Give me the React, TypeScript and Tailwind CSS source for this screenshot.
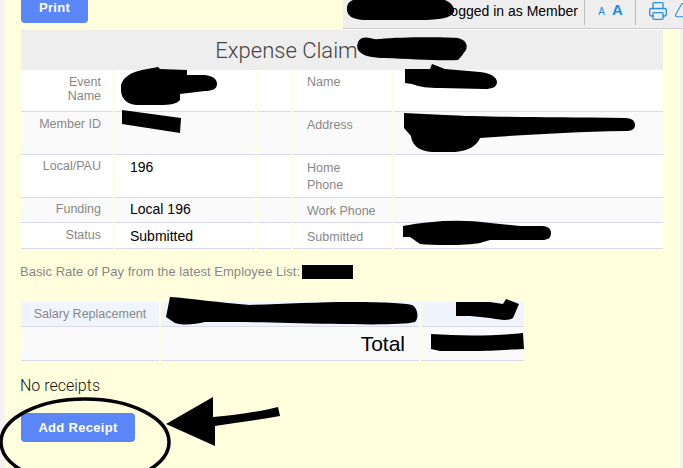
import { Printer, Triangle } from "lucide-react";

const sans = "font-['Liberation_Sans',Arial,sans-serif]";

type Row = {
  h: string;
  bg: string;
  label: string;
  value: string;
  label2: string;
  labelTop: string;
  valueTop: string;
  label2Top: string;
};

const rows: Row[] = [
  { h: "h-[42px]", bg: "bg-white", label: "Event\nName", value: "", label2: "Name", labelTop: "pt-[5px] leading-[14px]", valueTop: "pt-[4px]", label2Top: "pt-[5px] leading-[15px]" },
  { h: "h-[43px]", bg: "bg-[#fafafa]", label: "Member ID", value: "", label2: "Address", labelTop: "pt-[5px] leading-[15px]", valueTop: "pt-[4px]", label2Top: "pt-[6px] leading-[15px]" },
  { h: "h-[43px]", bg: "bg-white", label: "Local/PAU", value: "196", label2: "Home\nPhone", labelTop: "pt-[4px] leading-[15px]", valueTop: "pt-[3px]", label2Top: "pt-[5px] leading-[17px]" },
  { h: "h-[25px]", bg: "bg-[#fafafa]", label: "Funding", value: "Local 196", label2: "Work Phone", labelTop: "pt-[4px] leading-[15px]", valueTop: "pt-[2px]", label2Top: "pt-[6px] leading-[15px]" },
  { h: "h-[26px]", bg: "bg-white", label: "Status", value: "Submitted", label2: "Submitted", labelTop: "pt-[5px] leading-[15px]", valueTop: "pt-[4px]", label2Top: "pt-[7px] leading-[15px]" },
];

function Redactions() {
  return (
    <svg className="absolute left-0 top-0 pointer-events-none" width="683" height="468" viewBox="0 0 683 468">
      <g fill="#000">
        <path d="M353 0 H445 C452 3 455 8 454 12 C451 18 440 20 420 20 H365 C352 20 346 15 347 8 C347 4 349 2 353 0Z" />
        <path d="M362 38 C368 36 372 40 380 39 C400 37 440 37 458 38 C466 40 468 45 466 50 C463 54 461 57 458 60 C440 61 410 59 385 58 C372 58 362 56 358 50 C356 45 358 40 362 38Z" />
        <path d="M121 85 C123 77 132 72 142 70 L158 67 L160 69 L187 70 L187 75 L205 75 C213 76 217 79 217 84 C217 89 212 91 205 91 L180 94 L180 100 C177 104 170 105 160 105 L138 105 C128 105 121 99 121 90Z" />
        <path d="M405 69 L430 69 L432 64 L445 69 L480 72 C490 73 497 77 497 82 C497 87 492 89 485 89 L440 88 C428 88 420 87 412 84 L405 83Z" />
        <path d="M122 110 L181 118 L180 133 L122 124Z" />
        <path d="M404 113 L445 115 C480 117 540 117 625 118 C632 118 635 121 635 125 C635 129 632 131 625 131 C570 132 520 135 480 138 C478 144 470 151 455 152 L432 152 C420 151 412 146 411 136 L404 128Z" />
        <path d="M403 226 C430 221 460 219 490 223 L520 226 L542 226 C548 226 551 229 551 233 C551 238 548 240 542 240 L490 240 L480 243 C470 245 440 246 420 244 L410 237 L403 237Z" />
        <rect x="302" y="265" width="51" height="14" />
        <path d="M170 297 C190 298 220 303 250 305 C280 304 320 302 350 302 C380 302 405 303 412 305 C418 308 419 318 415 322 C400 326 340 324 290 323 C260 322 235 322 205 322 C195 324 185 326 175 323 L166 317Z" />
        <path d="M456 302 L490 302 L503 304 L506 299 L519 304 L513 318 C509 321 500 320 490 318 L470 316 L456 316Z" />
        <path d="M431 334 C460 336 495 336 523 333 L524 349 C500 350 490 351 470 351 L440 351 L431 349Z" />
        <path d="M166 424 L213 397 L213 417 C235 415 258 412 278 407 L280 416 C258 420 235 423 215 426 L215 446Z" />
      </g>
      <ellipse cx="85" cy="442" rx="84" ry="43" fill="none" stroke="#000" strokeWidth="3.5" />
    </svg>
  );
}

export default function App() {
  return (
    <div className={`relative w-[683px] h-[468px] overflow-hidden bg-[#f2f2f2] pl-[5px] pr-[3px] ${sans}`}>
      <main className="h-full bg-[#ffffdd] pl-[15px] flex flex-col">
        <button className="mt-[-7px] ml-[1px] w-[67px] h-[30px] shrink-0 rounded-[4px] bg-[#5b86f7] text-white text-[13px] tracking-[0.3px] font-bold">
          Print
        </button>

        <section className="mt-[7px] ml-[1px] w-[642px]">
          <h1 className="h-[40px] bg-[#eeeeee] flex items-center justify-center text-[22px] text-[#444444] font-light font-['Roboto',sans-serif] pr-[111px]">
            Expense Claim
          </h1>
          {rows.map((r) => (
            <div key={r.label} className={`grid grid-cols-[92px_140px_34px_99px_269px] gap-x-[2px] ${r.h}`}>
              <div className={`${r.bg} border-b border-[#d9d9ea] pr-[12px] text-right text-[12.5px] text-[#888888] whitespace-pre ${r.labelTop}`}>
                {r.label}
              </div>
              <div className={`${r.bg} border-b border-[#d9d9ea] pl-[15px] text-[14px] leading-[18px] text-black ${r.valueTop}`}>
                {r.value}
              </div>
              <div className={`${r.bg} border-b border-[#d9d9ea]`} />
              <div className={`${r.bg} border-b border-[#d9d9ea] pl-[14px] text-[12.5px] text-[#888888] whitespace-pre ${r.label2Top}`}>
                {r.label2}
              </div>
              <div className={`${r.bg} border-b border-[#d9d9ea]`} />
            </div>
          ))}
        </section>

        <p className="mt-[15px] text-[13px] leading-[16px] text-[#888888] tracking-[0.04px]">
          Basic Rate of Pay from the latest Employee List:
        </p>

        <section className="mt-[22px] ml-[1px] w-[503px] grid grid-cols-[138px_258px_103px] gap-x-[2px]">
          <div className="h-[25px] bg-[#eff4ff] border-b border-[#d9d9ea] text-center text-[12.5px] leading-[24px] text-[#888888]">
            Salary Replacement
          </div>
          <div className="h-[25px] bg-[#eff4ff] border-b border-[#d9d9ea]" />
          <div className="h-[25px] bg-[#eff4ff] border-b border-[#d9d9ea]" />
          <div className="h-[34px] bg-[#fafafa] border-b border-[#d9d9ea]" />
          <div className="h-[34px] bg-[#fafafa] border-b border-[#d9d9ea] text-right pr-[14px] text-[21px] leading-[34px] text-black">
            Total
          </div>
          <div className="h-[34px] bg-[#fafafa] border-b border-[#d9d9ea]" />
        </section>

        <p className="mt-[15px] text-[16px] leading-[20px] text-[#111111] font-light font-['Roboto',sans-serif]">
          No receipts
        </p>

        <button className="mt-[17px] ml-[1px] w-[114px] h-[29px] shrink-0 rounded-[4px] bg-[#5b86f7] text-white text-[13px] tracking-[0.3px] font-bold">
          Add Receipt
        </button>
      </main>

      <div className="absolute right-0 top-0 w-[340px] h-[29px] bg-[#eeeeee] border-b border-[#cccccc] flex items-start justify-end overflow-hidden">
        <span className="mt-[2px] text-[14px] leading-[18px] text-black whitespace-nowrap">Logged in as Member</span>
        <div className="ml-[6px] w-[52px] h-[25px] border-x border-[#bbbbbb] flex items-baseline justify-center gap-[7px] pl-[1px] text-[#1a8ae5] font-bold leading-[20px]">
          <span className="text-[10px] font-normal">A</span>
          <span className="text-[15px]">A</span>
        </div>
        <Printer className="ml-[12px] mt-[1px] shrink-0 text-[#2b8fe0]" size={20} strokeWidth={1.6} />
        <Triangle className="ml-[6px] mr-[-9px] mt-[1px] shrink-0 text-[#2b8fe0]" size={18} strokeWidth={1.4} />
      </div>

      <Redactions />
    </div>
  );
}
